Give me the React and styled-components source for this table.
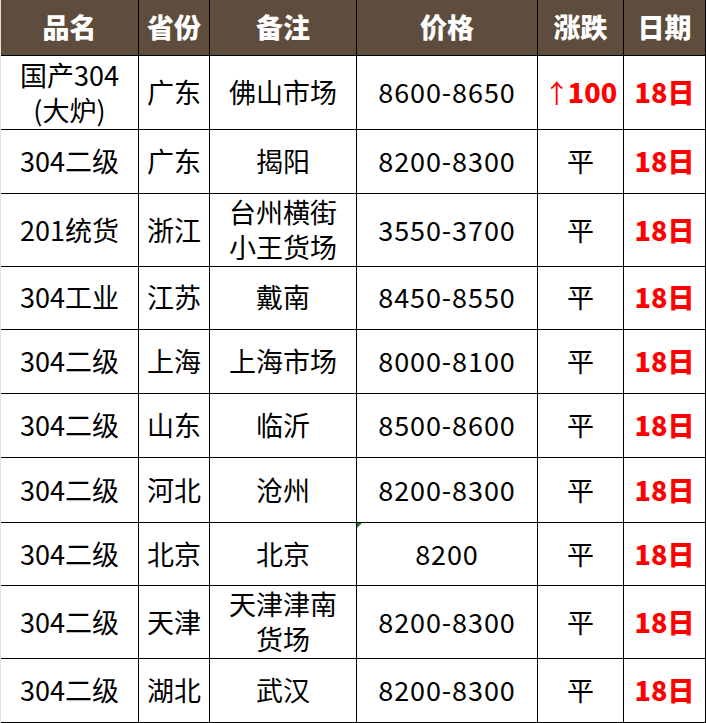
import React from "react";
import styled, { createGlobalStyle } from "styled-components";

const Global = createGlobalStyle`
  html, body { margin: 0; padding: 0; background: #fff; }
  body { font-family: "Noto Sans CJK SC", "Noto Sans", sans-serif; }
`;

const COLS = "138px 71px 147px 181px 86px 82px";

const Table = styled.div`
  width: 705px;
  border-left: 1px solid #dde1e8;
  background: #fff;
`;

const Row = styled.div`
  display: grid;
  grid-template-columns: ${COLS};
  height: ${(p) => p.$h}px;
  background: ${(p) => (p.$head ? "#5e4c3c" : "#fff")};
`;

const Cell = styled.div`
  position: relative;
  box-sizing: border-box;
  display: flex;
  align-items: center;
  justify-content: center;
  text-align: center;
  border-right: 1px solid #000;
  border-bottom: 1px solid #000;
  font-size: 27px;
  line-height: 35px;
  padding-bottom: 2px;
  color: ${(p) => (p.$red ? "#ff0000" : p.$head ? "#fff" : "#000")};
  font-weight: ${(p) => (p.$bold ? 900 : 400)};
  letter-spacing: ${(p) => (p.$num ? "0.9px" : "0")};
  white-space: pre-line;
`;

const Arrow = styled.span`
  font-weight: 400;
  font-size: 26px;
  margin-right: -2px;
`;

const Flag = styled.span`
  position: absolute;
  left: 0;
  top: 0;
  width: 0;
  height: 0;
  border-top: 5px solid #1e7a2e;
  border-right: 5px solid transparent;
`;

const headers = ["品名", "省份", "备注", "价格", "涨跌", "日期"];

const rows = [
  { h: 74, name: "国产304\n(大炉)", prov: "广东", note: "佛山市场", price: "8600-8650", chg: "100", up: true },
  { h: 64, name: "304二级", prov: "广东", note: "揭阳", price: "8200-8300", chg: "平" },
  { h: 72, name: "201统货", prov: "浙江", note: "台州横街\n小王货场", price: "3550-3700", chg: "平" },
  { h: 64, name: "304工业", prov: "江苏", note: "戴南", price: "8450-8550", chg: "平" },
  { h: 64, name: "304二级", prov: "上海", note: "上海市场", price: "8000-8100", chg: "平" },
  { h: 64, name: "304二级", prov: "山东", note: "临沂", price: "8500-8600", chg: "平" },
  { h: 65, name: "304二级", prov: "河北", note: "沧州", price: "8200-8300", chg: "平" },
  { h: 63, name: "304二级", prov: "北京", note: "北京", price: "8200", chg: "平", flag: true },
  { h: 73, name: "304二级", prov: "天津", note: "天津津南\n货场", price: "8200-8300", chg: "平" },
  { h: 64, name: "304二级", prov: "湖北", note: "武汉", price: "8200-8300", chg: "平" },
];

export default function App() {
  return (
    <>
      <Global />
      <Table>
        <Row $h={56} $head>
          {headers.map((t) => (
            <Cell key={t} $head $bold>
              {t}
            </Cell>
          ))}
        </Row>
        {rows.map((r, i) => (
          <Row key={i} $h={r.h}>
            <Cell>{r.name}</Cell>
            <Cell>{r.prov}</Cell>
            <Cell>{r.note}</Cell>
            <Cell $num>
              {r.flag && <Flag />}
              {r.price}
            </Cell>
            <Cell $red={r.up} $bold={r.up}>
              {r.up && <Arrow>↑</Arrow>}
              {r.chg}
            </Cell>
            <Cell $red $bold>
              18日
            </Cell>
          </Row>
        ))}
      </Table>
    </>
  );
}
